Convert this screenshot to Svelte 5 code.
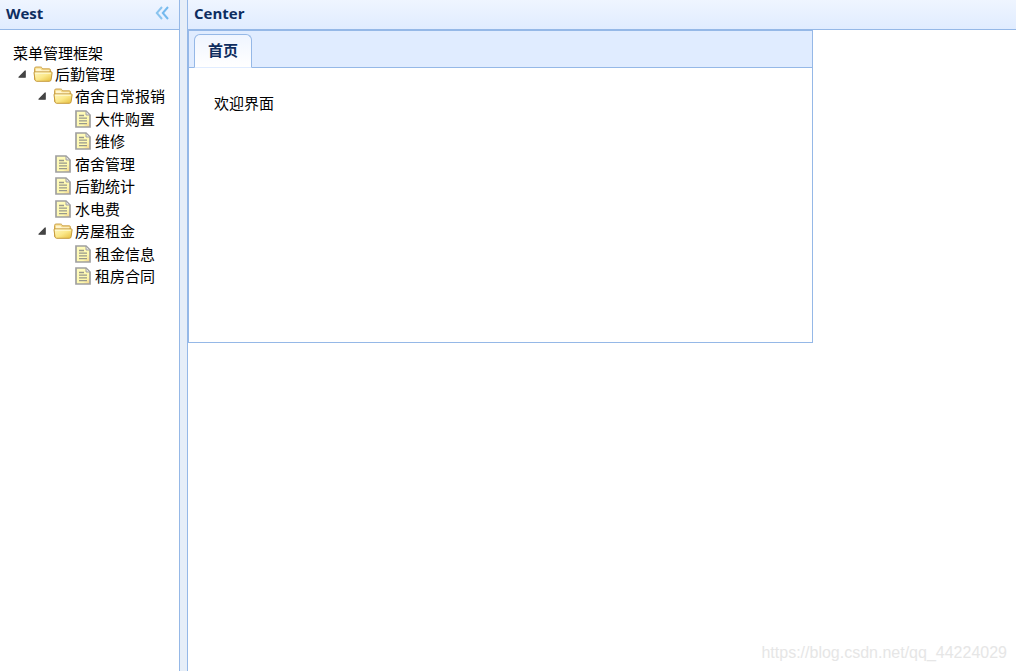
<script>
  const nodes = [
    { text: '后勤管理', level: 0, folder: true },
    { text: '宿舍日常报销', level: 1, folder: true },
    { text: '大件购置', level: 2 },
    { text: '维修', level: 2 },
    { text: '宿舍管理', level: 1 },
    { text: '后勤统计', level: 1 },
    { text: '水电费', level: 1 },
    { text: '房屋租金', level: 1, folder: true },
    { text: '租金信息', level: 2 },
    { text: '租房合同', level: 2 }
  ];
</script>

<div class="layout">
  <aside class="west">
    <header class="panel-header">
      <h2>West</h2>
      <button class="collapse" aria-label="Collapse">
        <svg width="14" height="14" viewBox="0 0 14 14" fill="none" stroke-width="2">
          <path d="M7 1 1.8 7 7 13" stroke="#8ac4ef" />
          <path d="M13 1 7.8 7 13 13" stroke="#74b9ee" />
        </svg>
      </button>
    </header>
    <div class="menu">
      <div class="menu-title">菜单管理框架</div>
      <ul class="tree" role="tree">
        {#each nodes as node}
          <li role="treeitem" aria-selected="false" aria-level={node.level + 1} class="level-{node.level}">
            <span class="hit">
              {#if node.folder}
                <svg width="8" height="8" viewBox="0 0 8 8">
                  <path d="M7.2 1v6.2H1z" fill="#444" stroke="#444" stroke-width="1.2" stroke-linejoin="round" />
                </svg>
              {/if}
            </span>
            <span class="icon">
              {#if node.folder}
                <svg width="20" height="18" viewBox="0 0 20 18">
                  <defs>
                    <linearGradient id="folder" x1="0" y1="0" x2="1" y2="1">
                      <stop offset="0" stop-color="#fff6bd" />
                      <stop offset=".5" stop-color="#fbe88a" />
                      <stop offset="1" stop-color="#e6bd3a" />
                    </linearGradient>
                  </defs>
                  <path d="M1.5 14.5V3.6Q1.5 2 3.1 2h4.4q1 0 1.5.8l.7 1h6.4q1.4 0 1.4 1.4v9.3z" fill="#f5d985" stroke="#cda552" />
                  <path d="M3 5V3.5h4.4L8.7 5.3H16V7H3z" fill="#fff5ce" />
                  <path d="M1 7.9q-.2-1 .9-1h16.3q1.1 0 .9 1l-1 6.8q-.2 1.6-1.7 1.6H3.7q-1.5 0-1.7-1.6z" fill="url(#folder)" stroke="#c69a3c" />
                  <path d="M2.2 8.2h15.6" stroke="#fffbd8" />
                </svg>
              {:else}
                <svg width="16" height="18" viewBox="0 0 16 18">
                  <defs>
                    <linearGradient id="page" x1="0" y1="0" x2="1" y2="1">
                      <stop offset="0" stop-color="#fffcc0" />
                      <stop offset=".7" stop-color="#fff9ae" />
                      <stop offset="1" stop-color="#f2cd86" />
                    </linearGradient>
                  </defs>
                  <path d="M1 1h10l4 4v12H1z" fill="url(#page)" stroke="#a0a0a0" stroke-width="1.7" />
                  <path d="M11 1v4h4z" fill="#e4e4e4" stroke="#a0a0a0" />
                  <path d="M4 5.5h5M4 8.2h8M4 10.9h8M4 13.6h8" stroke="#98988c" stroke-width="1.3" />
                </svg>
              {/if}
            </span>
            <span>{node.text}</span>
          </li>
        {/each}
      </ul>
    </div>
  </aside>

  <main class="center">
    <header class="panel-header">
      <h2>Center</h2>
    </header>
    <section class="tabs">
      <div class="tab-strip" role="tablist">
        <button class="tab" role="tab" id="tab-home" aria-selected="true" aria-controls="panel-home">首页</button>
      </div>
      <div class="tab-panel" role="tabpanel" id="panel-home" aria-labelledby="tab-home">欢迎界面</div>
    </section>
    <footer>https://blog.csdn.net/qq_44224029</footer>
  </main>
</div>

<style>
  :global(body) {
    margin: 0;
    background: #fff;
  }
  .layout {
    box-sizing: border-box;
    display: grid;
    grid-template-columns: 180px minmax(0, 1fr);
    column-gap: 7px;
    min-height: 100vh;
    background: #e6eef8;
    color: #000;
    font-family: "Open Sans", "Noto Sans CJK SC", sans-serif;
    font-size: 15px;
  }
  .west {
    background: #fff;
    border-right: 1px solid #95b8e7;
  }
  .center {
    display: flex;
    flex-direction: column;
    background: #fff;
    border-left: 1px solid #95b8e7;
  }
  .panel-header {
    box-sizing: border-box;
    display: flex;
    align-items: center;
    justify-content: space-between;
    height: 30px;
    padding: 0 10px 4px 6px;
    border-bottom: 1px solid #95b8e7;
    background: linear-gradient(#eff5ff, #e0ecff);
  }
  h2 {
    margin: 0;
    color: #0e2d5f;
    font-size: 15px;
    font-weight: 700;
    line-height: 20px;
  }
  .collapse {
    display: flex;
    padding: 0;
    border: 0;
    background: none;
  }
  .menu {
    padding: 12px;
    font-family: "Noto Sans CJK SC", sans-serif;
    line-height: 22px;
  }
  .menu-title {
    height: 21px;
    padding-left: 1px;
  }
  .tree {
    margin: 0 -8px 0 0;
    padding: 0;
    list-style: none;
  }
  .tree li {
    display: flex;
    align-items: flex-start;
    height: 22px;
    white-space: nowrap;
  }
  .tree li:nth-child(even) {
    height: 23px;
  }
  .tree .level-1 {
    padding-left: 20px;
  }
  .tree .level-2 {
    padding-left: 40px;
  }
  .hit,
  .icon {
    display: flex;
    flex: none;
    align-items: center;
    justify-content: center;
    width: 20px;
    height: 22px;
  }
  .icon {
    width: 22px;
    margin-right: 1px;
  }
  .tabs {
    box-sizing: border-box;
    width: 625px;
    max-width: 100%;
    border: 1px solid #95b8e7;
  }
  .tab-strip {
    display: flex;
    padding: 3px 5px 0;
    border-bottom: 1px solid #95b8e7;
    background: #e0ecff;
  }
  .tab {
    box-sizing: border-box;
    height: 34px;
    margin-bottom: -1px;
    padding: 0 13px 4px;
    border: 1px solid #95b8e7;
    border-bottom-color: #e0ecff;
    border-radius: 6px 6px 0 0;
    background: linear-gradient(#eff5ff, #fff);
    color: #0e2d5f;
    font-family: "Noto Sans CJK SC", sans-serif;
    font-size: 15px;
    font-weight: 700;
  }
  .tab-panel {
    box-sizing: border-box;
    min-height: 274px;
    padding: 24px 25px;
    font-family: "Noto Sans CJK SC", sans-serif;
    line-height: 22px;
  }
  footer {
    margin-top: auto;
    padding: 0 9px 8px;
    color: #e6e6e6;
    font-family: "Liberation Sans", Arial, sans-serif;
    font-size: 16px;
    line-height: 20px;
    text-align: right;
  }
</style>
